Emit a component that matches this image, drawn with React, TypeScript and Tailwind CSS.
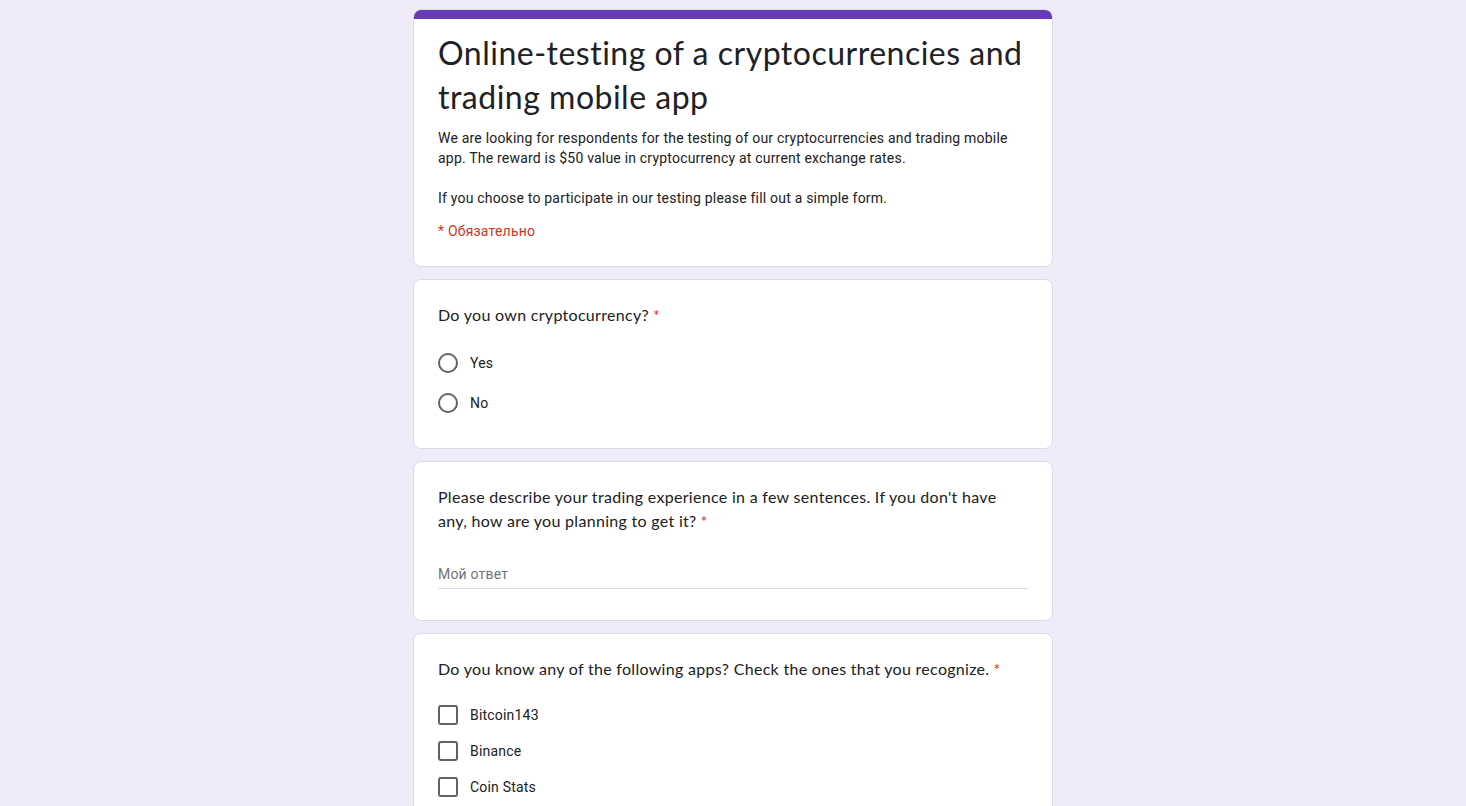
import type { ReactNode } from "react";

const titleFont = "font-['Lato','Open_Sans',sans-serif] [font-variant-ligatures:none]";
const bodyFont = "font-['Roboto','Liberation_Sans',sans-serif] tracking-[0.2px]";

function Card({ children, accent = false }: { children: ReactNode; accent?: boolean }) {
  return (
    <div className="overflow-hidden rounded-lg border border-[#dadce0] bg-white">
      {accent && <div className="-mx-px -mt-px h-[10px] bg-[#673ab7]" />}
      <div className="px-6">{children}</div>
    </div>
  );
}

function Required() {
  return <span className="ml-1 text-[#d93025]">*</span>;
}

function Radio({ label }: { label: string }) {
  return (
    <div className="flex h-10 items-center gap-3">
      <span className="h-5 w-5 rounded-full border-2 border-[#5f6368]" />
      <span className={`${bodyFont} text-sm text-[#202124]`}>{label}</span>
    </div>
  );
}

function Checkbox({ label }: { label: string }) {
  return (
    <div className="flex h-9 items-center gap-3">
      <span className="h-5 w-5 rounded-[3px] border-2 border-[#5f6368]" />
      <span className={`${bodyFont} text-sm text-[#202124]`}>{label}</span>
    </div>
  );
}

export default function App() {
  return (
    <div className="min-h-screen bg-[#f0ebf8] pt-[9px] pb-6">
      <div className="mx-auto flex w-[640px] flex-col gap-3">
        <Card accent>
          <h1
            className={`${titleFont} pt-3 text-[32px] leading-[44px] tracking-[0.5px] text-[#202124]`}
          >
            Online-testing of a cryptocurrencies and
            <br />
            trading mobile app
          </h1>
          <div className={`${bodyFont} mt-[9px] text-sm leading-5 text-[#202124]`}>
            <p>
              We are looking for respondents for the testing of our cryptocurrencies and trading mobile
              app. The reward is $50 value in cryptocurrency at current exchange rates.
            </p>
            <p className="mt-5">
              If you choose to participate in our testing please fill out a simple form.
            </p>
          </div>
          <p className={`${bodyFont} mt-[13px] pb-[25px] text-sm leading-5 text-[#d93025]`}>
            * Обязательно
          </p>
        </Card>

        <Card>
          <div className="pt-[23px] pb-[25px]">
            <p className={`${titleFont} text-base leading-6 tracking-[0.3px] text-[#202124]`}>
              Do you own cryptocurrency?
              <Required />
            </p>
            <div className="mt-4">
              <Radio label="Yes" />
              <Radio label="No" />
            </div>
          </div>
        </Card>

        <Card>
          <div className="pt-[23px] pb-[31px]">
            <p className={`${titleFont} text-base leading-6 tracking-[0.3px] text-[#202124]`}>
              Please describe your trading experience in a few sentences. If you don't have
              <br />
              any, how are you planning to get it?
              <Required />
            </p>
            <div
              className={`${bodyFont} mt-[31px] border-b border-[#dadce0] pb-1 text-sm leading-5 text-[#70757a]`}
            >
              Мой ответ
            </div>
          </div>
        </Card>

        <Card>
          <div className="pt-[23px] pb-6">
            <p className={`${titleFont} text-base leading-6 tracking-[0.3px] text-[#202124]`}>
              Do you know any of the following apps? Check the ones that you recognize.
              <Required />
            </p>
            <div className="mt-4">
              <Checkbox label="Bitcoin143" />
              <Checkbox label="Binance" />
              <Checkbox label="Coin Stats" />
            </div>
          </div>
        </Card>
      </div>
    </div>
  );
}
